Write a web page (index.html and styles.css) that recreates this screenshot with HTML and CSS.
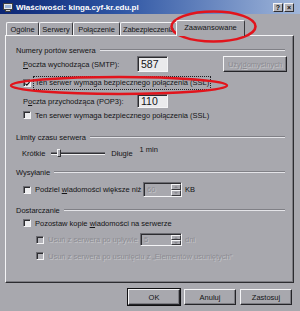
FILE: index.html
```html
<!DOCTYPE html>
<html lang="pl">
<head>
    <meta charset="UTF-8">
    <title>Właściwości: kinga.cyf-kr.edu.pl</title>
    <link rel="stylesheet" href="styles.css">
</head>
<body>
    <div class="dialog">
        <div class="titlebar">
            <svg class="title-icon" width="10" height="10" viewBox="0 0 10 10">
                <rect x="0.5" y="1.5" width="9" height="6" fill="#e8e8e8" stroke="#404040"/>
                <rect x="2" y="3" width="6" height="3" fill="#9cb4d8"/>
                <rect x="2.5" y="7.5" width="5" height="2" fill="#d0d0d0" stroke="#404040"/>
            </svg>
            <span class="title">Właściwości: kinga.cyf-kr.edu.pl</span>
            <div class="tb-buttons">
                <span class="tb-btn">?</span>
                <span class="tb-btn">×</span>
            </div>
        </div>

        <div class="tabs">
            <div class="tab tab-general">Ogólne</div>
            <div class="tab tab-servers">Serwery</div>
            <div class="tab tab-conn">Połączenie</div>
            <div class="tab tab-security">Zabezpieczenia</div>
            <div class="tab tab-advanced active">Zaawansowane</div>
        </div>

        <div class="panel">
            <div class="group group-ports"><span>Numery portów serwera</span><i class="rule"></i></div>

            <div class="row row-smtp">
                <span class="port-label"><u>P</u>oczta wychodząca (SMTP):</span>
                <span class="field port">587</span>
                <span class="btn btn-defaults disabled">Użyj <u>d</u>omyślnych</span>
            </div>

            <div class="row row-ssl1">
                <span class="check checked">
                    <svg width="6" height="6" viewBox="0 0 6 6"><path d="M0.5 2.5 L2.2 4.3 L5.5 0.8" fill="none" stroke="#101010" stroke-width="1.4"/></svg>
                </span>
                <span class="focus">Ten serwer wymaga bezpiecznego połączenia (SSL)</span>
            </div>

            <div class="row row-pop">
                <span class="port-label">P<u>o</u>czta przychodząca (POP3):</span>
                <span class="field port">110</span>
            </div>

            <div class="row row-ssl2">
                <span class="check"></span>
                <span>Ten serwer wymaga bezpiecznego połączenia (SSL)</span>
            </div>

            <div class="group group-timeout"><span>Limity czasu serwera</span><i class="rule"></i></div>

            <div class="row row-slider">
                <span>Krótkie</span>
                <span class="slider"><i class="thumb"></i></span>
                <span>Długie</span>
                <span class="timeout-value">1 min</span>
            </div>

            <div class="group group-send"><span>Wysyłanie</span><i class="rule"></i></div>

            <div class="row row-split">
                <span class="check"></span>
                <span class="split-label">Podziel <u>w</u>iadomości większe niż</span>
                <span class="field spin-field split-field disabled">60<span class="spinner"><i class="up"></i><i class="down"></i></span></span>
                <span class="unit">KB</span>
            </div>

            <div class="group group-delivery"><span>Dostarczanie</span><i class="rule"></i></div>

            <div class="row row-keep">
                <span class="check"></span>
                <span>Pozostaw kopie <u>w</u>iadomości na serwerze</span>
            </div>

            <div class="row sub row-after">
                <span class="check disabled"></span>
                <span class="after-label disabled">Usuń z serwera po upływie</span>
                <span class="field spin-field after-field disabled">5<span class="spinner"><i class="up"></i><i class="down"></i></span></span>
                <span class="unit disabled">dni</span>
            </div>

            <div class="row sub row-deleted">
                <span class="check disabled"></span>
                <span class="disabled">Usuń z serwera po usunięciu z „Elementów usuniętych”</span>
            </div>
        </div>

        <div class="actions">
            <span class="btn default">OK</span>
            <span class="btn">Anuluj</span>
            <span class="btn">Zastosuj</span>
        </div>

        <svg class="marks" width="300" height="311" viewBox="0 0 300 311">
            <ellipse cx="213.5" cy="26.5" rx="42" ry="15" fill="none" stroke="#e2141c" stroke-width="2.6"/>
            <ellipse cx="119" cy="85.5" rx="108" ry="8.5" fill="none" stroke="#e2141c" stroke-width="2.4"/>
        </svg>
    </div>
</body>
</html>
```

FILE: styles.css
```css
* {
    box-sizing: border-box;
}
html, body {
    margin: 0;
    padding: 0;
    background: #a8a8ae;
}
body {
    font-family: "Liberation Sans", Arial, sans-serif;
    font-size: 7.5px;
    color: #141416;
}
u {
    text-decoration-thickness: 1px;
    text-underline-offset: 1px;
}
.dialog {
    position: relative;
    width: 300px;
    height: 311px;
    overflow: hidden;
}

/* title bar */
.titlebar {
    height: 14px;
    display: flex;
    align-items: center;
    padding: 0 6px 0 3px;
    background: linear-gradient(90deg, #0c2674 0%, #2f56a4 40%, #a0b6da 100%);
}
.title-icon {
    flex: none;
}
.title {
    margin-left: 3px;
    color: #fff;
    font-weight: bold;
    font-size: 8px;
    white-space: nowrap;
}
.tb-buttons {
    margin-left: auto;
    display: flex;
    gap: 1px;
}
.tb-btn {
    width: 10px;
    height: 9px;
    display: flex;
    align-items: center;
    justify-content: center;
    background: #b4b4ba;
    border: 1px solid;
    border-color: #f4f4f6 #303034 #303034 #f4f4f6;
    font-size: 7px;
    font-weight: bold;
    line-height: 1;
    color: #101010;
}

/* tabs */
.tabs {
    height: 21px;
    display: flex;
    align-items: flex-end;
    padding-left: 6px;
}
.tab {
    height: 13px;
    display: flex;
    align-items: center;
    justify-content: center;
    border: 1px solid;
    border-bottom: 0;
    border-color: #f4f4f6 #38383c transparent #f4f4f6;
    border-radius: 2px 2px 0 0;
    white-space: nowrap;
}
.tab-general { width: 33px; }
.tab-servers { width: 34px; }
.tab-conn { width: 47px; }
.tab-security { width: 58px; justify-content: flex-start; padding-left: 2px; letter-spacing: -0.1px; }
.tab-advanced { width: 69px; }
.tab.active {
    height: 16px;
    margin: 0 0 -1px -2px;
    position: relative;
    z-index: 1;
    background: #a8a8ae;
    padding-bottom: 2px;
}

/* panel */
.panel {
    height: 248px;
    margin: 0 6px 0 5px;
    padding: 0 8px 0 10px;
    border: 1px solid;
    border-color: #f4f4f6 #2c2c30 #2c2c30 #f4f4f6;
    box-shadow: inset -1px -1px 0 #7c7c82;
}
.group {
    height: 12px;
    display: flex;
    align-items: center;
    white-space: nowrap;
}
.rule {
    flex: 1;
    height: 2px;
    margin-left: 4px;
    border-top: 1px solid #808086;
    border-bottom: 1px solid #e4e4e8;
}
.group-ports { margin-top: 8px; }
.group-timeout { margin-top: 10px; }
.group-send { margin-top: 5px; }
.group-delivery { margin-top: 7px; }

.row {
    height: 12px;
    display: flex;
    align-items: center;
    padding-left: 7px;
    white-space: nowrap;
}
.row.sub { padding-left: 20px; }
.row-smtp { height: 16px; }
.row-ssl1 { height: 14px; margin-top: 4px; }
.row-pop { height: 14px; margin-top: 4px; }
.row-ssl2 { margin-top: 1px; }
.row-slider { height: 16px; margin-top: 2px; padding-left: 6px; }
.row-split { height: 15px; margin-top: 4px; }
.row-keep { margin-top: 1px; }
.row-after { height: 13px; margin-top: 4px; }
.row-deleted { margin-top: 4px; }

.port-label { width: 114px; }
.split-label { width: 108px; }
.after-label { width: 92px; }

.disabled {
    color: #8c8c92;
    text-shadow: 1px 1px 0 #c4c4c8;
}

/* checkbox */
.check {
    flex: none;
    width: 8px;
    height: 8px;
    margin-right: 4px;
    display: flex;
    align-items: center;
    justify-content: center;
    background: #ececee;
    border: 1px solid;
    border-color: #6c6c72 #f4f4f6 #f4f4f6 #6c6c72;
    box-shadow: inset 1px 1px 0 #2c2c30;
}
.check svg {
    margin: 1px 0 0 1px;
}
.check.disabled {
    background: #b4b4ba;
}
.focus {
    outline: 1px dotted #202024;
    padding: 0 1px;
    margin-left: -1px;
    line-height: 12px;
}

/* text fields */
.field {
    position: relative;
    height: 100%;
    display: flex;
    align-items: center;
    padding-left: 3px;
    background: #eaeaec;
    border: 1px solid;
    border-color: #6c6c72 #f4f4f6 #f4f4f6 #6c6c72;
    box-shadow: inset 1px 1px 0 #2c2c30;
}
.port {
    width: 31px;
    font-size: 10.5px;
}
.field.disabled {
    background: #a8a8ae;
}
.split-field { width: 39px; }
.after-field { width: 42px; }
.spinner {
    position: absolute;
    top: 1px;
    right: 0;
    bottom: 0;
    width: 10px;
    display: flex;
    flex-direction: column;
}
.spinner i {
    flex: 1;
    position: relative;
    background: #a8a8ae;
    border: 1px solid;
    border-color: #f4f4f6 #3a3a3e #3a3a3e #f4f4f6;
}
.spinner i::after {
    content: "";
    position: absolute;
    left: 2px;
    top: 1px;
    border-left: 2px solid transparent;
    border-right: 2px solid transparent;
}
.spinner .up::after { border-bottom: 2px solid #8a8a90; }
.spinner .down::after { border-top: 2px solid #8a8a90; }
.unit { margin-left: 3px; }

/* slider */
.slider {
    position: relative;
    width: 54px;
    height: 3px;
    margin: 0 6px;
    border-top: 1px solid #6c6c72;
    border-bottom: 1px solid #f0f0f2;
    background: #303034;
}
.thumb {
    position: absolute;
    left: 6px;
    top: -4px;
    width: 4px;
    height: 8px;
    background: #a8a8ae;
    border: 1px solid;
    border-color: #f4f4f6 #303034 #303034 #f4f4f6;
}
.timeout-value {
    align-self: flex-start;
    margin-left: 7px;
    line-height: 9px;
}

/* buttons */
.btn {
    flex: none;
    height: 16px;
    display: flex;
    align-items: center;
    justify-content: center;
    background: #a8a8ae;
    border: 1px solid;
    border-color: #f4f4f6 #242428 #242428 #f4f4f6;
    box-shadow: inset -1px -1px 0 #7c7c82;
    white-space: nowrap;
}
.btn-defaults {
    width: 64px;
    height: 16px;
    margin-left: auto;
    margin-right: -2px;
}
.actions {
    display: flex;
    justify-content: flex-end;
    gap: 4px;
    margin-top: 6px;
    padding-right: 8px;
}
.actions .btn {
    width: 52px;
}
.btn.default {
    outline: 1px solid #101012;
}

.marks {
    position: absolute;
    left: 0;
    top: 0;
    pointer-events: none;
}
```
